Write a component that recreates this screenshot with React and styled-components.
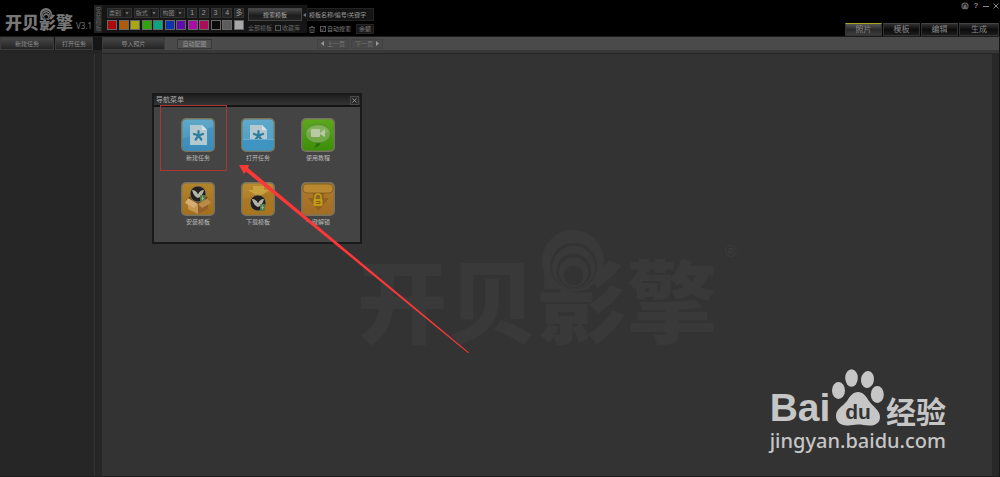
import React from 'react';
import styled, { createGlobalStyle } from 'styled-components';

const COLORS = [
  '#ac0a0a',
  '#ae5c0c',
  '#aaa80c',
  '#30a40c',
  '#0ca480',
  '#0c34ac',
  '#600cac',
  '#ac0caa',
  '#ac0c5c',
  '#0a0a0a',
  '#5c5c5c',
  '#a8a8a8',
];

const Rings = ({ color, gap }) => (
  <svg viewBox="0 0 184 184" aria-hidden="true">
    <circle cx="92" cy="92" r="92" fill={color} />
    <circle cx="94" cy="107" r="69" fill={gap} />
    <circle cx="94" cy="111" r="64" fill={color} />
    <circle cx="94" cy="121" r="51" fill={gap} />
    <circle cx="94" cy="125" r="44" fill={color} />
    <circle cx="94" cy="135" r="29" fill={gap} />
  </svg>
);

const Brand = ({ size, ring, color, gap }) => (
  <BrandName $size={size} $color={color}>
    开贝
    <BrandLetter>
      影
      <BrandRing $size={ring}>
        <Rings color={color} gap={gap} />
      </BrandRing>
    </BrandLetter>
    擎
  </BrandName>
);

const Combo = ({ label }) => (
  <ComboFrame>
    <ComboSelect aria-label={label} defaultValue={label}>
      <option>{label}</option>
    </ComboSelect>
    <ComboArrow viewBox="0 0 8 10" aria-hidden="true">
      <path d="M0.5 0v10" stroke="#101010" />
      <path d="M2 4h4L4 6.500z" fill="#888" />
    </ComboArrow>
  </ComboFrame>
);

const Tile = ({ id, from, to, children }) => (
  <svg width="34" height="34" viewBox="0 0 34 34" aria-hidden="true">
    <defs>
      <linearGradient id={id} x1="0" y1="0" x2="0" y2="1">
        <stop offset="0" stopColor={from} />
        <stop offset="1" stopColor={to} />
      </linearGradient>
    </defs>
    <rect width="34" height="34" rx="5" fill="#77745f" />
    <rect x="1.500" y="1.500" width="31" height="31" rx="4" fill={`url(#${id})`} />
    {children}
  </svg>
);

const Asterisk = () => (
  <g stroke="#2c7d9e" strokeWidth="2.200" strokeLinecap="round">
    <path d="M17.500 17.500V13M17.500 17.500l4.500-1.500M17.500 17.500l2.800 4M17.500 17.500l-2.800 4M17.500 17.500L13 16" />
  </g>
);

const NewTaskIcon = () => (
  <Tile id="new-task" from="#5fa9ca" to="#3f8fbd">
    <path d="M1.500 21C12 17 22 11 32.500 9v20a4 4 0 0 1-4 4h-23a4 4 0 0 1-4-4z" fill="#3b8bbb" opacity=".6" />
    <path d="M9 7h12l5 5v15H9z" fill="#b3c8cf" />
    <path d="M21 7v5h5z" fill="#d5e0e3" />
    <Asterisk />
  </Tile>
);

const OpenTaskIcon = () => (
  <Tile id="open-task" from="#5fa9ca" to="#4a9cc4">
    <path d="M9 7h12l5 5v15H9z" fill="#b3c8cf" />
    <path d="M21 7v5h5z" fill="#d5e0e3" />
    <Asterisk />
    <path d="M1.500 21h31v7.500a4 4 0 0 1-4 4h-23a4 4 0 0 1-4-4z" fill="#4094c2" />
    <path d="M1.500 21.500h31" stroke="#7cb4cf" strokeWidth=".8" />
  </Tile>
);

const TutorialIcon = () => (
  <Tile id="tutorial" from="#5da71c" to="#3c8f08">
    <path d="M15 24c1 2 0 4-2 6 4-1 6-3 7-6z" fill="#2c6b0b" />
    <ellipse cx="17" cy="15.500" rx="12.500" ry="9.500" fill="#73a84a" stroke="#4c8c28" strokeWidth=".8" />
    <path d="M6 14c2-8 20-8 22 0-6 3-16 3-22 0z" fill="#96bb74" opacity=".5" />
    <rect x="10" y="11" width="9" height="8" rx="1" fill="#b9c9a4" />
    <path d="M19 15l5-4v8l-5-3z" fill="#b9c9a4" />
  </Tile>
);

const Bird = ({ x, y }) => (
  <g transform={`translate(${x} ${y})`}>
    <circle r="8" fill="#21201d" stroke="#91815a" strokeWidth=".8" />
    <path d="M-6-4c3 0 5 2 6 4 1-2 3-4 6-4-1 4-3 7-6 8-3-1-5-4-6-8z" fill="#b5b3a9" />
    <path d="M-2-4l2 4 2-4z" fill="#21201d" />
    <rect x="2" y="1" width="5" height="7" rx="1" fill="#507b48" />
    <path d="M4.500 2.500v4M3.500 4.500h2.500" stroke="#a4bd93" strokeWidth=".8" />
  </g>
);

const InstallIcon = () => (
  <Tile id="install" from="#b28329" to="#a56f1c">
    <path d="M5 18l5-5h14l5 5-12 5z" fill="#6c4517" />
    <Bird x={17} y={12} />
    <path d="M7 19l10 4v9l-10-5z" fill="#c79652" />
    <path d="M17 23l10-4v8l-10 5z" fill="#94602a" />
    <path d="M7 16l10 6-4 4-9-5z" fill="#d5ad70" />
    <path d="M27 16l-10 6 4 4 9-5z" fill="#bd8949" />
  </Tile>
);

const DownloadIcon = () => (
  <Tile id="download" from="#b78a2f" to="#a87422">
    <path d="M1.500 17c10-1 20-4 31-8v20a4 4 0 0 1-4 4h-23a4 4 0 0 1-4-4z" fill="#a7731e" opacity=".6" />
    <path d="M12 4h11v4h5L17.500 15 7 8h5z" fill="#c9a13d" />
    <Bird x={17} y={21} />
  </Tile>
);

const UnlockIcon = () => (
  <Tile id="unlock" from="#b17a28" to="#a36c26">
    <path d="M12 11h11v5h5L17.500 29 7 16h5z" fill="#8b6420" />
    <rect x="2" y="2" width="30" height="9" rx="4" fill="#b98830" stroke="#82591c" strokeWidth=".8" />
    <path d="M14 18v-3a3 3 0 0 1 6 0v3" fill="none" stroke="#c59a18" strokeWidth="1.500" />
    <rect x="12.500" y="17" width="9" height="7" rx="1" fill="#c59a18" />
    <path d="M15 19.500h4v2h-4" fill="none" stroke="#765012" strokeWidth=".8" />
  </Tile>
);

const MENU = [
  { label: '新建任务', icon: <NewTaskIcon /> },
  { label: '打开任务', icon: <OpenTaskIcon /> },
  { label: '使用教程', icon: <TutorialIcon /> },
  { label: '安装模板', icon: <InstallIcon /> },
  { label: '下载模板', icon: <DownloadIcon /> },
  { label: '一键解锁', icon: <UnlockIcon /> },
];

const Header = () => (
  <HeaderBar>
    <LogoArea>
      <Brand size={17} ring={12} color="#777" gap="#000" />
      <Version>V3.1</Version>
    </LogoArea>
    <FilterPanel>
      <SideLabel>安装模板</SideLabel>
      <Filters>
        <FilterRow>
          <Combo label="类别" />
          <Combo label="版式" />
          <Combo label="构图" />
          {['1', '2', '3', '4', '多'].map((n) => (
            <CountButton key={n}>{n}</CountButton>
          ))}
        </FilterRow>
        <FilterRow>
          {COLORS.map((c) => (
            <Swatch key={c} $color={c} aria-label={c} />
          ))}
        </FilterRow>
      </Filters>
      <SearchActions>
        <SearchButton>搜索模板</SearchButton>
        <ScopeRow>
          <span>全部模板</span>
          <CheckLabel>
            <CheckBox type="checkbox" />
            收藏库
          </CheckLabel>
        </ScopeRow>
      </SearchActions>
      <Collapse aria-label="收起">
        <svg width="3" height="4" viewBox="0 0 3 4">
          <path d="M3 0v4L0 2z" fill="#777" />
        </svg>
      </Collapse>
    </FilterPanel>
    <KeywordArea>
      <KeywordInput aria-label="关键字" defaultValue="模板名称/编号/关键字" />
      <KeywordRow>
        <svg width="6" height="7" viewBox="0 0 6 7" aria-hidden="true">
          <path d="M0 1.500h6M2 .5h2M1 2v4.500h4V2M3 3v2.500" fill="none" stroke="#555" />
        </svg>
        <CheckLabel>
          <CheckBox type="checkbox" defaultChecked />
          自动搜索
        </CheckLabel>
        <BalanceButton>余额</BalanceButton>
      </KeywordRow>
    </KeywordArea>
    <HeaderEnd>
      <WindowControls>
        <WindowButton aria-label="客服">
          <svg width="8" height="8" viewBox="0 0 8 8">
            <circle cx="4" cy="4" r="3.600" fill="#666" />
            <path d="M2 5.500V4a2 2 0 0 1 4 0v1.500M3 7.500h2" fill="none" stroke="#111" />
          </svg>
        </WindowButton>
        <WindowButton>?</WindowButton>
        <WindowButton aria-label="最小化">
          <svg width="6" height="6" viewBox="0 0 6 6">
            <path d="M0 3.500h6" stroke="#888" />
          </svg>
        </WindowButton>
        <WindowButton aria-label="关闭">
          <svg width="6" height="6" viewBox="0 0 6 6">
            <path d="M.5.5l5 5M5.500.5l-5 5" stroke="#888" />
          </svg>
        </WindowButton>
      </WindowControls>
      <Tabs>
        <Tab $active>照片</Tab>
        <Tab>模板</Tab>
        <Tab>编辑</Tab>
        <Tab>生成</Tab>
      </Tabs>
    </HeaderEnd>
  </HeaderBar>
);

const Toolbar = () => (
  <ToolbarRow>
    <TaskButtons>
      <BarButton>新建任务</BarButton>
      <BarButton>打开任务</BarButton>
    </TaskButtons>
    <PhotoTools>
      <ImportButton>导入照片</ImportButton>
      <SmallButton>自动配图</SmallButton>
      <Pager>
        <PageButton>
          <svg width="3" height="5" viewBox="0 0 3 5" aria-hidden="true">
            <path d="M3 0v5L0 2.500z" fill="#999" />
          </svg>
          上一页
        </PageButton>
        <PageButton>
          下一页
          <svg width="3" height="5" viewBox="0 0 3 5" aria-hidden="true">
            <path d="M0 0v5l3-2.500z" fill="#999" />
          </svg>
        </PageButton>
      </Pager>
    </PhotoTools>
  </ToolbarRow>
);

const NavDialog = () => (
  <Dialog role="dialog" aria-label="导航菜单">
    <DialogTitle>
      导航菜单
      <DialogClose aria-label="关闭">
        <svg width="5" height="5" viewBox="0 0 5 5">
          <path d="M.5.5l4 4M4.500.5l-4 4" stroke="#aaa" strokeWidth=".8" />
        </svg>
      </DialogClose>
    </DialogTitle>
    <MenuGrid>
      {MENU.map((item) => (
        <MenuItem key={item.label}>
          {item.icon}
          {item.label}
        </MenuItem>
      ))}
    </MenuGrid>
  </Dialog>
);

const BaiduMark = () => (
  <Baidu>
    <BaiduTop>
      <BaiduLatin>Bai</BaiduLatin>
      <Paw>
        <svg width="52" height="57" viewBox="0 0 52 57" aria-hidden="true">
          <g fill="#c6c6c6">
            <ellipse cx="6.500" cy="21.500" rx="6.500" ry="8.500" />
            <ellipse cx="19.500" cy="9" rx="6.300" ry="8.700" />
            <ellipse cx="35.500" cy="10.500" rx="6.500" ry="8.500" transform="rotate(8 35.500 10.500)" />
            <ellipse cx="45.300" cy="25.500" rx="6.500" ry="8.500" />
            <path d="M26 23c5 0 8 4 11 9 4 6 11 9 11 16 0 6-5 9-11 8.500-4-.3-7-1-11-1s-6 .9-10 1C9 57 4 53 4 47c0-7 6-9 11-15 3-5 6-9 11-9z" />
          </g>
        </svg>
        <PawText>du</PawText>
      </Paw>
      <BaiduHan>经验</BaiduHan>
    </BaiduTop>
    <BaiduUrl>jingyan.baidu.com</BaiduUrl>
  </Baidu>
);

const App = () => {
  return (
    <Page>
      <GlobalStyle />
      <Header />
      <Toolbar />
      <Body>
        <Sidebar />
        <Gutter />
        <Workspace>
          <Watermark>
            <Brand size={90} ring={62} color="#393939" gap="#333" />
            <Registered>®</Registered>
          </Watermark>
          <NavDialog />
          <BaiduMark />
        </Workspace>
        <ScrollRail />
      </Body>
      <Annotation viewBox="0 0 310 250" aria-hidden="true">
        <rect x="0.500" y="1.500" width="66" height="65" fill="none" stroke="#b03434" />
        <path d="M79 61l10 0-1 3L309 248.500l-1 .5L86 67.500 84 70z" fill="#fb3838" />
      </Annotation>
    </Page>
  );
};

export default App;

const GlobalStyle = createGlobalStyle`
  * {
    box-sizing: border-box;
  }

  body {
    margin: 0;
    background: #000;
    color: #808080;
    font-family: 'Liberation Sans', 'Noto Sans CJK SC', sans-serif;
    font-size: 6px;
    line-height: 8px;
  }

  button,
  input,
  select {
    margin: 0;
    padding: 0;
    border: 0;
    border-radius: 0;
    background: none;
    color: inherit;
    font: inherit;
  }

  svg {
    display: block;
    flex: none;
  }
`;

const Page = styled.div`
  position: relative;
  display: flex;
  flex-direction: column;
  min-height: 100vh;
`;

const HeaderBar = styled.header`
  display: flex;
  height: 37px;
  border-bottom: 1px solid #1c1c1c;
  background: #000;
`;

const LogoArea = styled.div`
  display: flex;
  align-items: flex-end;
  gap: 3px;
  width: 94px;
  padding: 0 0 6px 5px;
`;

const BrandName = styled.div`
  display: flex;
  color: ${({ $color }) => $color};
  font-family: 'Noto Sans CJK SC', sans-serif;
  font-size: ${({ $size }) => $size}px;
  font-weight: 900;
  line-height: 1;
`;

const BrandLetter = styled.span`
  position: relative;
`;

const BrandRing = styled.span`
  position: absolute;
  left: 6%;
  bottom: 56%;
  width: ${({ $size }) => $size}px;
`;

const Version = styled.span`
  color: #777;
  font-family: 'Noto Sans', sans-serif;
  font-size: 8px;
  line-height: 8px;
`;

const FilterPanel = styled.section`
  display: flex;
  width: 213px;
  height: 28px;
  margin-top: 5px;
  background: #151515;
`;

const SideLabel = styled.span`
  width: 8px;
  margin-right: 5px;
  padding-top: 2px;
  background: #222;
  color: #606060;
  line-height: 8px;
  writing-mode: vertical-rl;
`;

const Filters = styled.div`
  display: flex;
  flex-direction: column;
  gap: 2px;
  width: 137px;
  padding-top: 3px;
`;

const FilterRow = styled.div`
  display: flex;
  justify-content: space-between;
`;

const ComboFrame = styled.div`
  display: flex;
  width: 25px;
  height: 10px;
  border: 1px solid #333;
  background: #222;
`;

const ComboSelect = styled.select`
  flex: 1;
  min-width: 0;
  padding-left: 1px;
  appearance: none;
  line-height: 8px;
`;

const ComboArrow = styled.svg`
  width: 8px;
  height: 8px;
`;

const CountButton = styled.button`
  width: 10px;
  height: 10px;
  border: 1px solid #333;
  background: #262626;
  color: #999;
  font-size: 7px;
  line-height: 8px;
`;

const Swatch = styled.button`
  width: 10px;
  height: 10px;
  border: 1px solid #686868;
  background: ${({ $color }) => $color};
`;

const SearchActions = styled.div`
  display: flex;
  flex-direction: column;
  gap: 3px;
  width: 54px;
  margin-left: 4px;
  padding-top: 3px;
`;

const SearchButton = styled.button`
  height: 13px;
  border: 1px solid #444;
  background: linear-gradient(#4a4a4a, #1c1c1c 60%, #242424);
  color: #aaa;
`;

const ScopeRow = styled.div`
  display: flex;
  gap: 3px;
  color: #666;
  white-space: nowrap;
`;

const CheckLabel = styled.label`
  display: flex;
  align-items: center;
  gap: 1px;
  white-space: nowrap;
`;

const CheckBox = styled.input`
  display: grid;
  place-items: center;
  width: 6px;
  height: 6px;
  border: 1px solid #555;
  appearance: none;

  &:checked::before {
    content: '✓';
    font-size: 6px;
    line-height: 4px;
  }
`;

const Collapse = styled.button`
  align-self: flex-start;
  margin: 8px 0 0 1px;
`;

const KeywordArea = styled.div`
  display: flex;
  flex-direction: column;
  gap: 3px;
  width: 67px;
  padding-top: 8px;
`;

const KeywordInput = styled.input`
  width: 100%;
  height: 13px;
  padding-left: 1px;
  border: 1px solid #222;
  background: #141414;
  color: #999;
`;

const KeywordRow = styled.div`
  display: flex;
  align-items: center;
  justify-content: space-between;
  padding-left: 2px;
`;

const BalanceButton = styled.button`
  width: 18px;
  height: 10px;
  border: 1px solid #242424;
  background: #181818;
`;

const HeaderEnd = styled.div`
  display: flex;
  flex-direction: column;
  align-items: flex-end;
  justify-content: space-between;
  margin-left: auto;
  padding-right: 1px;
`;

const WindowControls = styled.div`
  display: flex;
  align-items: center;
  gap: 4px;
  height: 11px;
`;

const WindowButton = styled.button`
  display: flex;
  align-items: center;
  justify-content: center;
  min-width: 6px;
  color: #888;
  font-size: 8px;
  font-weight: 700;
`;

const Tabs = styled.nav`
  display: flex;
  gap: 1px;
`;

const Tab = styled.button`
  width: 37px;
  height: 13px;
  border: 1px solid #333;
  border-top-color: ${({ $active }) => ($active ? '#a3a31c' : '#444')};
  background: ${({ $active }) =>
    $active
      ? 'linear-gradient(#555, #2a2a2a 50%, #3c3c3c)'
      : 'linear-gradient(#303030, #0c0c0c 50%, #1c1c1c)'};
  color: #888;
  font-size: 8px;
  line-height: 10px;

  &:last-child {
    width: 40px;
  }
`;

const ToolbarRow = styled.div`
  display: flex;
  height: 17px;
  border-bottom: 1px solid #262626;
  background: #161616;
`;

const TaskButtons = styled.div`
  display: grid;
  grid-template-columns: 54px 38px;
  gap: 1px;
  width: 102px;
  border-bottom: 3px solid #242424;
`;

const BarButton = styled.button`
  border: 1px solid #3c3c3c;
  background: linear-gradient(#464646, #242424);
  color: #8c8c8c;
`;

const PhotoTools = styled.div`
  display: flex;
  flex: 1;
  align-items: center;
  margin-right: 1px;
  border-bottom: 3px solid #383838;
  background: #4a4a4a;
`;

const ImportButton = styled(BarButton)`
  width: 63px;
  height: 13px;
`;

const SmallButton = styled.button`
  width: 35px;
  height: 10px;
  margin-left: 12px;
  border: 1px solid #383838;
  background: #505050;
  color: #999;
`;

const Pager = styled.div`
  display: flex;
  gap: 2px;
  margin-left: 105px;
`;

const PageButton = styled.button`
  display: flex;
  align-items: center;
  justify-content: center;
  gap: 3px;
  width: 32px;
  height: 10px;
  border: 1px solid #424242;
  background: #484848;
  color: #777;
`;

const Body = styled.main`
  display: flex;
  flex: 1;
  border-right: 1px solid #161616;
  border-bottom: 1px solid #1c1c1c;
`;

const Sidebar = styled.aside`
  width: 95px;
  border-right: 1px solid #333;
  background: #262626;
`;

const Gutter = styled.div`
  width: 7px;
  background: #262626;
`;

const Workspace = styled.section`
  position: relative;
  display: flex;
  flex: 1;
  align-items: center;
  justify-content: center;
  background: #333;
`;

const ScrollRail = styled.div`
  width: 7px;
  background: #282828;
`;

const Watermark = styled.div`
  display: flex;
  padding-top: 64px;
`;

const Registered = styled.span`
  margin: -8px 0 0 8px;
  color: #3c3c3c;
  font-size: 16px;
  line-height: 1;
`;

const Dialog = styled.section`
  position: absolute;
  top: 39px;
  left: 50px;
  width: 210px;
  border: 2px solid #1a1a1a;
  background: #444;
`;

const DialogTitle = styled.h2`
  display: flex;
  align-items: center;
  justify-content: space-between;
  height: 12px;
  margin: 0;
  padding: 0 1px 0 2px;
  border-bottom: 2px solid #141414;
  background: linear-gradient(#1e1e1e, #343434);
  color: #aaa;
  font-size: 7px;
  font-weight: 400;
`;

const DialogClose = styled.button`
  display: grid;
  place-items: center;
  width: 9px;
  height: 9px;
  border: 1px solid #484848;
  background: #2a2a2a;
`;

const MenuGrid = styled.div`
  display: grid;
  grid-template-columns: repeat(3, 60px);
  justify-content: center;
  padding: 0 0 7px 2px;
`;

const MenuItem = styled.button`
  display: flex;
  flex-direction: column;
  align-items: center;
  gap: 2px;
  height: 64px;
  padding-top: 11px;
  color: #bbb;
`;

const Annotation = styled.svg`
  position: absolute;
  top: 104px;
  left: 160px;
  width: 310px;
  height: 250px;
  pointer-events: none;
`;

const Baidu = styled.div`
  position: absolute;
  right: 46px;
  bottom: 20px;
  color: #c6c6c6;
`;

const BaiduTop = styled.div`
  display: flex;
  align-items: flex-end;
  justify-content: space-between;
`;

const BaiduLatin = styled.span`
  font-size: 39px;
  font-weight: 700;
  line-height: 36px;
`;

const Paw = styled.div`
  position: relative;
`;

const PawText = styled.span`
  position: absolute;
  bottom: 4px;
  left: 13px;
  color: #333;
  font-size: 21px;
  font-weight: 700;
  line-height: 20px;
`;

const BaiduHan = styled.span`
  padding-bottom: 1px;
  font-family: 'Noto Sans CJK SC', sans-serif;
  font-size: 30px;
  font-weight: 700;
  line-height: 30px;
`;

const BaiduUrl = styled.div`
  font-family: 'Noto Sans', sans-serif;
  font-size: 20px;
  font-weight: 500;
  line-height: 30px;
`;
